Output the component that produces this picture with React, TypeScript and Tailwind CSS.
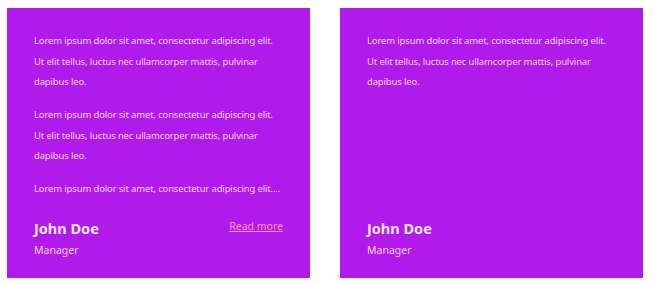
import React from "react";

const P = "Lorem ipsum dolor sit amet, consectetur adipiscing elit. Ut elit tellus, luctus nec ullamcorper mattis, pulvinar dapibus leo.";

function Card({ paras, more }: { paras: string[]; more?: boolean }) {
  return (
    <div className="w-[303px] h-[270px] bg-[#b01aea] flex flex-col px-[27px] pt-[23px] pb-[20px]">
      <div className="flex flex-col gap-[12.5px] text-[9.5px] tracking-[-0.15px] leading-[20.5px] text-[#f3d3f8]">
        {paras.map((t, i) => (
          <p key={i}>{t}</p>
        ))}
      </div>
      <div className="mt-auto flex items-start justify-between">
        <div className="flex flex-col">
          <span className="text-[14.5px] font-bold leading-[20px] text-[#fbe6fd]">John Doe</span>
          <span className="text-[10.5px] leading-[16px] mt-[4px] text-[#f3d3f8]">Manager</span>
        </div>
        {more && (
          <a href="#" className="text-[10.5px] leading-[16px] underline text-[#ff94c6]">Read more</a>
        )}
      </div>
    </div>
  );
}

export default function App() {
  return (
    <div className="w-[653px] h-[284px] bg-white flex gap-[30px] pl-[7px] pt-[8px]" style={{ fontFamily: '"Noto Sans", sans-serif' }}>
      <Card paras={[P, P, "Lorem ipsum dolor sit amet, consectetur adipiscing elit...."]} more />
      <Card paras={[P]} />
    </div>
  );
}
